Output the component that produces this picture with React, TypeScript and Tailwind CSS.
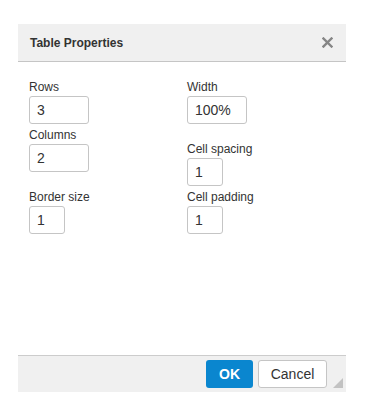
import React from "react";

const font = { fontFamily: '"Liberation Sans", Arial, sans-serif' };

function Field({
  label,
  value,
  w,
  mt,
}: {
  label: string;
  value: string;
  w: string;
  mt: string;
}) {
  return (
    <div className={`flex flex-col ${mt}`}>
      <div className="h-[17px] text-[12px] leading-[17px] text-[#333]">{label}</div>
      <div
        className={`h-[28px] ${w} rounded-[3px] border border-[#c5c5c5] bg-white pl-[7px] text-[14px] leading-[26px] text-[#333]`}
      >
        {value}
      </div>
    </div>
  );
}

export default function App() {
  return (
    <div className="h-[413px] w-[370px] bg-white pt-[24px] pl-[18px]" style={font}>
      <div className="flex h-[368px] w-[328px] flex-col bg-white">
        <div className="flex h-[38px] items-center justify-between border-b border-[#c5c5c5] bg-[#f0f0f0] pl-[12px] pr-[13px]">
          <span className="text-[12px] font-bold text-[#333]">Table Properties</span>
          <svg width="11" height="11" viewBox="0 0 11 11">
            <path d="M1.5 1.5 L9.5 9.5 M9.5 1.5 L1.5 9.5" stroke="#858585" strokeWidth="2.4" strokeLinecap="square" />
          </svg>
        </div>
        <div className="flex flex-1 pt-[17px] pl-[11px]">
          <div className="flex w-[158px] flex-col">
            <Field label="Rows" value="3" w="w-[60px]" mt="mt-0" />
            <Field label="Columns" value="2" w="w-[60px]" mt="mt-[3px]" />
            <Field label="Border size" value="1" w="w-[36px]" mt="mt-[17px]" />
          </div>
          <div className="flex flex-col">
            <Field label="Width" value="100%" w="w-[60px]" mt="mt-0" />
            <Field label="Cell spacing" value="1" w="w-[36px]" mt="mt-[17px]" />
            <Field label="Cell padding" value="1" w="w-[36px]" mt="mt-[3px]" />
          </div>
        </div>
        <div className="relative flex h-[37px] items-center justify-end gap-[5px] border-t border-[#cccccc] bg-[#f0f0f0] pr-[19px]">
          <div className="flex h-[28px] w-[47px] items-center justify-center rounded-[3px] bg-[#0a86cf] text-[14px] font-bold text-white">
            OK
          </div>
          <div className="flex h-[28px] w-[69px] items-center justify-center rounded-[3px] border border-[#c5c5c5] bg-white text-[14px] text-[#333]">
            Cancel
          </div>
          <svg className="absolute right-[3px] bottom-[4px]" width="10" height="10" viewBox="0 0 10 10">
            <path d="M10 0 L10 10 L0 10 Z" fill="#c2c2c2" />
          </svg>
        </div>
      </div>
    </div>
  );
}
